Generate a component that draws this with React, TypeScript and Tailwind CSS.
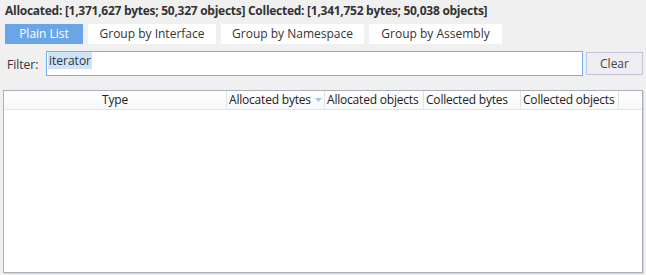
import React from "react";

const font = { fontFamily: '"Open Sans", "Noto Sans", sans-serif' };

export default function App() {
  const tabs = [
    { label: "Plain List", w: "w-[78px]", active: true },
    { label: "Group by Interface", w: "w-[128px]" },
    { label: "Group by Namespace", w: "w-[143px]" },
    { label: "Group by Assembly", w: "w-[133px]" },
  ];
  const cols = [
    { label: "Type", w: "w-[223px]", center: true },
    { label: "Allocated bytes", w: "w-[98px]", sort: true },
    { label: "Allocated objects", w: "w-[99px]" },
    { label: "Collected bytes", w: "w-[97px]" },
    { label: "Collected objects", w: "w-[98px]" },
  ];
  return (
    <div className="w-[646px] h-[275px] bg-[#f0f0f0] text-[12px] text-[#333] overflow-hidden flex flex-col" style={font}>
      <div className="pl-[5px] pt-[1px] h-[22px] leading-[20px] font-bold text-[12px] tracking-[-0.27px]">
        Allocated: [1,371,627 bytes; 50,327 objects] Collected: [1,341,752 bytes; 50,038 objects]
      </div>
      <div className="flex gap-[5px] pl-[5px] mt-[2px]">
        {tabs.map((t) => (
          <div
            key={t.label}
            className={`${t.w} h-[20px] flex items-center justify-center leading-none ${t.active ? "bg-[#6aa5e8] text-white" : "bg-white text-[#333]"}`}
          >
            {t.label}
          </div>
        ))}
      </div>
      <div className="flex items-center mt-[7px] h-[25px]">
        <div className="w-[46px] pl-[7px] pt-[2px]">Filter:</div>
        <div className="w-[537px] h-[25px] bg-white border border-[#78aee6] flex items-start pl-[1px]">
          <span className="bg-[#cde3f8] px-[1px] leading-[17px]">iterator</span>
        </div>
        <div className="ml-[3px] w-[57px] h-[23px] border border-[#c7c2dc] bg-[#ededf2] flex items-center justify-center text-[#444]">
          Clear
        </div>
      </div>
      <div className="ml-[3px] mt-[14px] w-[640px] h-[183px] border border-[#a7b2bd] bg-white flex flex-col shadow-[1px_1px_0_#d0d6dc]">
        <div className="flex h-[19px] border-b border-[#e5e5e5] bg-gradient-to-b from-white to-[#f7f8f9] text-[#222] tracking-[-0.2px]">
          {cols.map((c) => (
            <div
              key={c.label}
              className={`${c.w} h-full flex items-center border-r border-[#e3e3e3] px-[2px] whitespace-nowrap ${c.center ? "justify-center" : ""}`}
            >
              <span>{c.label}</span>
              {c.sort && (
                <svg width="7" height="4" viewBox="0 0 7 4" className="ml-[4px]">
                  <path d="M0 0 L7 0 L3.5 4 Z" fill="#a9c4de" />
                </svg>
              )}
            </div>
          ))}
          <div className="flex-1" />
        </div>
        <div className="flex-1" />
      </div>
    </div>
  );
}
